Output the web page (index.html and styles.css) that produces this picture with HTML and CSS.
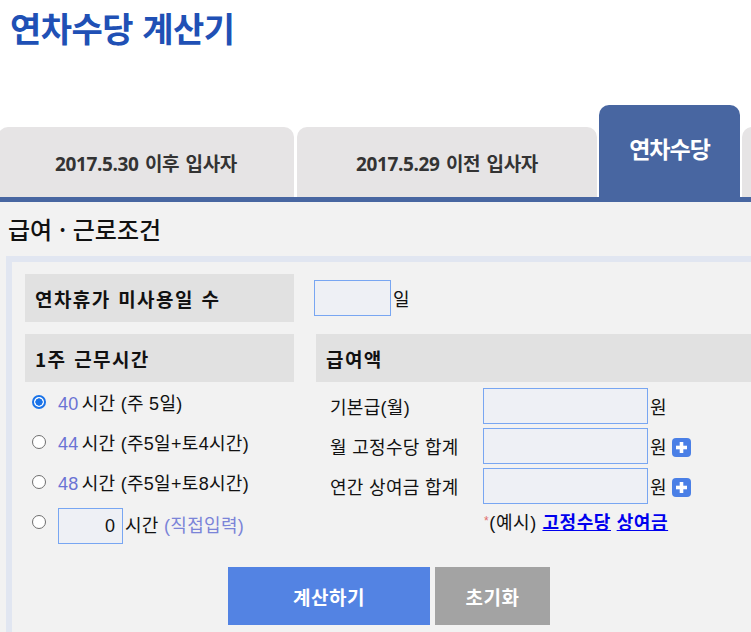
FILE: index.html
```html
<!DOCTYPE html>
<html lang="ko">
<head>
<meta charset="utf-8">
<title>연차수당 계산기</title>
<link rel="stylesheet" href="styles.css">
</head>
<body>
<header class="top">
  <h1 class="title">연차수당 계산기</h1>
</header>
<nav class="tabs">
  <div class="tab tab-first">2017.5.30 이후 입사자</div>
  <div class="tab tab-second">2017.5.29 이전 입사자</div>
  <div class="tab tab-active">연차수당</div>
  <div class="tab tab-more"></div>
</nav>
<main class="content">
  <h2 class="section-title">급여 · 근로조건</h2>
  <section class="panel">
    <div class="row-unused">
      <div class="label-box">연차휴가 미사용일 수</div>
      <input class="field field-days" type="text">
      <span class="unit">일</span>
    </div>
    <div class="cols">
      <div class="col-left">
        <div class="label-box">1주 근무시간</div>
        <ul class="radios">
          <li class="radio-row"><span class="radio checked"></span><span class="opt"><span class="num">40</span>시간 (주 5일)</span></li>
          <li class="radio-row"><span class="radio"></span><span class="opt"><span class="num">44</span>시간 (주5일+토4시간)</span></li>
          <li class="radio-row"><span class="radio"></span><span class="opt"><span class="num">48</span>시간 (주5일+토8시간)</span></li>
          <li class="radio-row radio-custom"><span class="radio"></span><input class="field field-hours" type="text" value="0"><span class="opt">시간 <span class="hint">(직접입력)</span></span></li>
        </ul>
      </div>
      <div class="col-right">
        <div class="label-box">급여액</div>
        <div class="pay-rows">
          <div class="pay-row"><span class="pay-label">기본급(월)</span><input class="field field-pay" type="text"><span class="unit">원</span></div>
          <div class="pay-row"><span class="pay-label">월 고정수당 합계</span><input class="field field-pay" type="text"><span class="unit">원</span><span class="plus"><svg width="19" height="19" viewBox="0 0 19 19"><rect x="0" y="0" width="19" height="19" rx="4" fill="#4a7fe6"/><rect x="4" y="7.7" width="11" height="3.6" fill="#fff"/><rect x="7.7" y="4" width="3.6" height="11" fill="#fff"/></svg></span></div>
          <div class="pay-row"><span class="pay-label">연간 상여금 합계</span><input class="field field-pay" type="text"><span class="unit">원</span><span class="plus"><svg width="19" height="19" viewBox="0 0 19 19"><rect x="0" y="0" width="19" height="19" rx="4" fill="#4a7fe6"/><rect x="4" y="7.7" width="11" height="3.6" fill="#fff"/><rect x="7.7" y="4" width="3.6" height="11" fill="#fff"/></svg></span></div>
        </div>
        <div class="note"><span class="star">*</span>(예시) <a href="#" class="link">고정수당</a> <a href="#" class="link">상여금</a></div>
      </div>
    </div>
    <div class="actions">
      <button class="btn btn-calc" type="button">계산하기</button>
      <button class="btn btn-reset" type="button">초기화</button>
    </div>
  </section>
</main>
</body>
</html>
```

FILE: styles.css
```css
html, body {
  margin: 0;
  padding: 0;
  overflow: hidden;
  background: #fff;
}
body {
  width: 751px;
  height: 632px;
  font-family: "Liberation Sans", "Noto Sans CJK KR", sans-serif;
  color: #111;
}
.top {
  padding: 6px 0 0 10px;
  height: 49px;
}
.title {
  margin: 0;
  font-family: "Noto Sans CJK KR", sans-serif;
  font-size: 34px;
  line-height: 44px;
  font-weight: 700;
  letter-spacing: -0.5px;
  color: #2050b5;
}
.tabs {
  margin-top: 50px;
  height: 92px;
  display: flex;
  align-items: flex-end;
  gap: 2px;
  overflow: hidden;
}
.tab {
  flex: none;
  height: 70px;
  background: #e6e4e5;
  border-radius: 10px 10px 0 0;
  display: flex;
  align-items: center;
  justify-content: center;
  font-family: "Open Sans", "Noto Sans CJK KR", sans-serif;
  font-weight: 700;
  font-size: 19px;
  letter-spacing: -0.4px;
  word-spacing: 2px;
  color: #333;
  padding-top: 2px;
  box-sizing: border-box;
}
.tab-first {
  width: 296px;
  margin-left: -2px;
  margin-right: 1px;
}
.tab-second {
  width: 300px;
}
.tab-active {
  width: 141px;
  height: 92px;
  background: #4866a1;
  color: #fff;
  font-family: "Noto Sans CJK KR", sans-serif;
  font-size: 23px;
  letter-spacing: -1px;
  padding-top: 0;
  padding-bottom: 6px;
}
.tab-more {
  width: 120px;
}
.content {
  border-top: 5px solid #4866a1;
  background: #f2f2f2;
  height: 430px;
}
.section-title {
  margin: 0;
  height: 54px;
  padding: 12px 0 0 8px;
  box-sizing: border-box;
  font-family: "Noto Sans CJK KR", sans-serif;
  font-weight: 500;
  font-size: 24px;
  line-height: 30px;
  letter-spacing: 0;
  color: #111;
}
.panel {
  margin-left: 6px;
  width: 900px;
  border: 6px solid #e1e6f1;
  border-right: none;
  padding: 12px 0 40px 13px;
  box-sizing: border-box;
}
.label-box {
  height: 48px;
  background: #e1e1e1;
  display: flex;
  align-items: center;
  padding-left: 10px;
  box-sizing: border-box;
  font-family: "Noto Sans CJK KR", sans-serif;
  font-weight: 700;
  font-size: 19px;
  letter-spacing: 1.4px;
  word-spacing: 1px;
  color: #111;
}
.row-unused {
  display: flex;
  align-items: center;
}
.row-unused .label-box {
  width: 269px;
}
.field {
  box-sizing: border-box;
  height: 36px;
  border: 1px solid #78a6f2;
  background: #eef0f5;
  margin: 0;
  padding: 0 8px;
  font-family: "Liberation Sans", sans-serif;
  font-size: 18px;
  color: #111;
  outline: none;
}
.field-days {
  width: 77px;
  margin-left: 20px;
}
.unit {
  font-size: 18px;
  margin-left: 2px;
}
.cols {
  margin-top: 12px;
  display: grid;
  grid-template-columns: 269px 1fr;
  gap: 22px;
}
.radios {
  list-style: none;
  margin: 0;
  padding: 0;
}
.radio-row {
  height: 40px;
  display: flex;
  align-items: center;
  font-size: 18px;
  letter-spacing: 0.3px;
}
.radio {
  flex: none;
  width: 14px;
  height: 14px;
  box-sizing: border-box;
  border: 1px solid #6f6f6f;
  border-radius: 50%;
  background: #fff;
  margin: 0 12px 0 7px;
}
.radio.checked {
  border: 2px solid #1a73e8;
  background: radial-gradient(circle, #1a73e8 0 3.4px, #fff 3.9px);
}
.num {
  color: #6a72d4;
  margin-right: 3px;
}
.radio-custom {
  align-items: flex-start;
  padding-top: 6px;
  box-sizing: border-box;
}
.radio-custom .radio {
  margin-top: 7px;
}
.radio-custom .opt {
  line-height: 36px;
  margin-left: 2px;
}
.field-hours {
  width: 65px;
  text-align: right;
  padding-right: 7px;
}
.hint {
  color: #7b84d8;
}
.pay-rows {
  margin-top: 6px;
  display: flex;
  flex-direction: column;
  gap: 4px;
}
.pay-row {
  display: flex;
  align-items: center;
  padding-left: 14px;
  font-size: 18px;
  letter-spacing: 0.3px;
}
.pay-label {
  width: 153px;
  flex: none;
}
.field-pay {
  width: 165px;
}
.plus {
  margin-left: 5px;
  display: flex;
  margin-top: 3px;
}
.note {
  margin-top: 5px;
  padding-left: 168px;
  font-size: 18px;
  line-height: 24px;
  letter-spacing: 0.6px;
}
.star {
  color: #e06a6a;
  font-size: 12px;
  vertical-align: 4px;
}
.link {
  color: #0000ee;
  font-weight: 700;
  text-decoration: underline;
}
.actions {
  margin-top: 25px;
  margin-left: 203px;
  display: flex;
  gap: 5px;
}
.btn {
  height: 58px;
  border: none;
  margin: 0;
  font-family: "Noto Sans CJK KR", sans-serif;
  font-weight: 700;
  font-size: 19px;
  letter-spacing: 0.5px;
  color: #fff;
  cursor: pointer;
}
.btn-calc {
  width: 202px;
  background: #5383e3;
}
.btn-reset {
  width: 115px;
  background: #a3a3a3;
}
```
